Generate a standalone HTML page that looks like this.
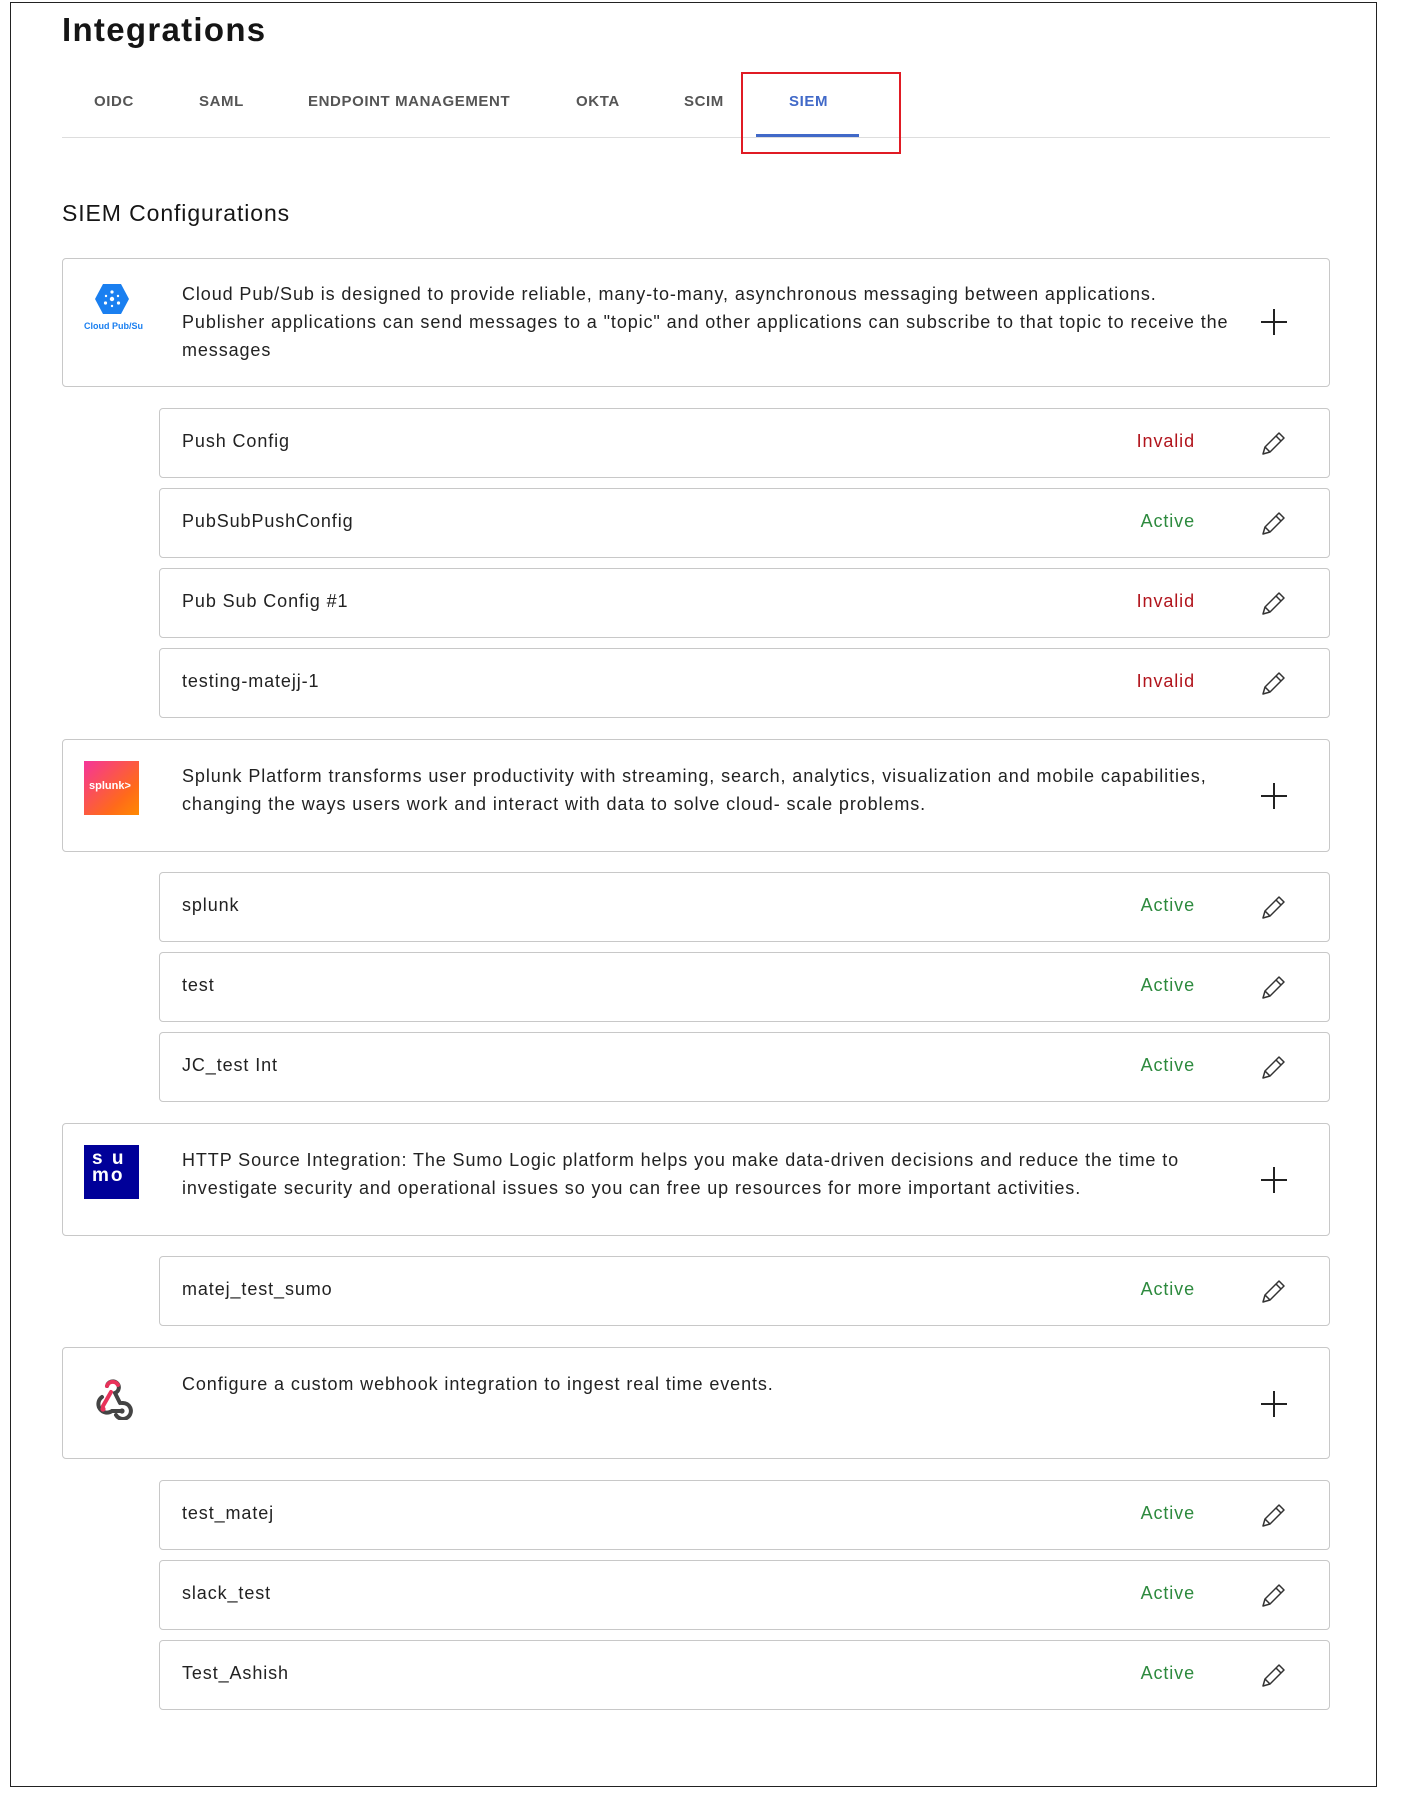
<!DOCTYPE html>
<html><head><meta charset="utf-8"><style>
*{margin:0;padding:0;box-sizing:border-box}
body{width:1411px;height:1818px;background:#fff;position:relative;font-family:"Liberation Sans",sans-serif;color:#222;overflow:hidden}
.a{position:absolute}
.outer{left:10px;top:2px;width:1367px;height:1785px;border:1px solid #222}
h1{position:absolute;left:62px;top:11px;font-size:33px;font-weight:bold;color:#151515;letter-spacing:1.3px}
.tab{position:absolute;top:93px;font-size:15px;font-weight:bold;color:#555;letter-spacing:0.6px}
.card{position:absolute;left:62px;width:1268px;border:1px solid #c8c8c8;border-radius:4px;background:#fff}
.row{position:absolute;left:159px;width:1171px;height:70px;border:1px solid #c8c8c8;border-radius:4px;background:#fff}
.row .n{position:absolute;left:22px;top:22px;font-size:18px;letter-spacing:0.9px;color:#222}
.row .s{position:absolute;right:134px;top:22px;font-size:18px;letter-spacing:0.9px}
.inv{color:#b1141c}.act{color:#2d8a3e}
.row svg{position:absolute;left:1099px;top:21px}
.desc{position:absolute;left:119px;font-size:18px;line-height:28px;letter-spacing:0.9px;color:#222;white-space:nowrap}
.plus{position:absolute;left:1198px;width:26px;height:26px}
.plus:before{content:"";position:absolute;left:12px;top:0;width:2px;height:26px;background:#222}
.plus:after{content:"";position:absolute;left:0;top:12px;width:26px;height:2px;background:#222}
</style></head><body>
<div class="a outer"></div>
<h1>Integrations</h1>
<div class="tab" style="left:94px">OIDC</div>
<div class="tab" style="left:199px">SAML</div>
<div class="tab" style="left:308px">ENDPOINT MANAGEMENT</div>
<div class="tab" style="left:576px">OKTA</div>
<div class="tab" style="left:684px">SCIM</div>
<div class="tab" style="left:789px;color:#4169c8">SIEM</div>
<div class="a" style="left:62px;top:137px;width:1268px;height:1px;background:#ddd"></div>
<div class="a" style="left:756px;top:134px;width:103px;height:3px;background:#4169c8"></div>
<div class="a" style="left:741px;top:72px;width:160px;height:82px;border:2.5px solid #e01b24"></div>
<div class="a" style="left:62px;top:200px;font-size:23px;letter-spacing:0.9px;color:#151515">SIEM Configurations</div>

<!-- Card 1 -->
<div class="card" style="top:258px;height:129px">
 <svg class="a" style="left:31px;top:24px" width="36" height="32" viewBox="0 0 36 32"><polygon points="9,1 27,1 35,16 27,31 9,31 1,16" fill="#1a7ff0"/><circle cx="18" cy="16" r="2.2" fill="#fff"/><circle cx="18" cy="9" r="1.6" fill="#fff"/><circle cx="11.5" cy="20" r="1.6" fill="#fff"/><circle cx="24.5" cy="20" r="1.6" fill="#fff"/><circle cx="12" cy="13" r="1.2" fill="#fff"/><circle cx="24" cy="13" r="1.2" fill="#fff"/><circle cx="18" cy="23" r="1.2" fill="#fff"/></svg>
 <div class="a" style="left:21px;top:62px;font-size:9px;color:#1a7ff0;font-weight:bold">Cloud Pub/Su</div>
 <div class="desc" style="top:21px">Cloud Pub/Sub is designed to provide reliable, many-to-many, asynchronous messaging between applications.<br>Publisher applications can send messages to a "topic" and other applications can subscribe to that topic to receive the<br>messages</div>
 <div class="plus" style="top:50px"></div>
</div>
<div class="row" style="top:408px"><div class="n">Push Config</div><div class="s inv">Invalid</div><svg width="28" height="28" viewBox="0 0 28 28" fill="none" stroke="#333" stroke-width="1.5" stroke-linejoin="round"><path d="M4 24 L6 17 L20 3 L25 8 L11 22 Z M17 6 L22 11 M6 17 L11 22"/></svg></div>
<div class="row" style="top:488px"><div class="n">PubSubPushConfig</div><div class="s act">Active</div><svg width="28" height="28" viewBox="0 0 28 28" fill="none" stroke="#333" stroke-width="1.5" stroke-linejoin="round"><path d="M4 24 L6 17 L20 3 L25 8 L11 22 Z M17 6 L22 11 M6 17 L11 22"/></svg></div>
<div class="row" style="top:568px"><div class="n">Pub Sub Config #1</div><div class="s inv">Invalid</div><svg width="28" height="28" viewBox="0 0 28 28" fill="none" stroke="#333" stroke-width="1.5" stroke-linejoin="round"><path d="M4 24 L6 17 L20 3 L25 8 L11 22 Z M17 6 L22 11 M6 17 L11 22"/></svg></div>
<div class="row" style="top:648px"><div class="n">testing-matejj-1</div><div class="s inv">Invalid</div><svg width="28" height="28" viewBox="0 0 28 28" fill="none" stroke="#333" stroke-width="1.5" stroke-linejoin="round"><path d="M4 24 L6 17 L20 3 L25 8 L11 22 Z M17 6 L22 11 M6 17 L11 22"/></svg></div>

<!-- Card 2 -->
<div class="card" style="top:739px;height:113px">
 <div class="a" style="left:21px;top:21px;width:55px;height:54px;background:linear-gradient(135deg,#f5349a,#ff6a1a 70%,#ff8a00)"></div>
 <div class="a" style="left:26px;top:40px;font-size:11px;color:#fff;font-weight:bold">splunk&gt;</div>
 <div class="desc" style="top:22px">Splunk Platform transforms user productivity with streaming, search, analytics, visualization and mobile capabilities,<br>changing the ways users work and interact with data to solve cloud- scale problems.</div>
 <div class="plus" style="top:43px"></div>
</div>
<div class="row" style="top:872px"><div class="n">splunk</div><div class="s act">Active</div><svg width="28" height="28" viewBox="0 0 28 28" fill="none" stroke="#333" stroke-width="1.5" stroke-linejoin="round"><path d="M4 24 L6 17 L20 3 L25 8 L11 22 Z M17 6 L22 11 M6 17 L11 22"/></svg></div>
<div class="row" style="top:952px"><div class="n">test</div><div class="s act">Active</div><svg width="28" height="28" viewBox="0 0 28 28" fill="none" stroke="#333" stroke-width="1.5" stroke-linejoin="round"><path d="M4 24 L6 17 L20 3 L25 8 L11 22 Z M17 6 L22 11 M6 17 L11 22"/></svg></div>
<div class="row" style="top:1032px"><div class="n">JC_test Int</div><div class="s act">Active</div><svg width="28" height="28" viewBox="0 0 28 28" fill="none" stroke="#333" stroke-width="1.5" stroke-linejoin="round"><path d="M4 24 L6 17 L20 3 L25 8 L11 22 Z M17 6 L22 11 M6 17 L11 22"/></svg></div>

<!-- Card 3 -->
<div class="card" style="top:1123px;height:113px">
 <div class="a" style="left:21px;top:21px;width:55px;height:54px;background:#000099"></div>
 <div class="a" style="left:29px;top:26px;font-size:19px;line-height:17px;color:#fff;font-weight:bold;letter-spacing:2px">s u<br>mo</div>
 <div class="desc" style="top:22px">HTTP Source Integration: The Sumo Logic platform helps you make data-driven decisions and reduce the time to<br>investigate security and operational issues so you can free up resources for more important activities.</div>
 <div class="plus" style="top:43px"></div>
</div>
<div class="row" style="top:1256px"><div class="n">matej_test_sumo</div><div class="s act">Active</div><svg width="28" height="28" viewBox="0 0 28 28" fill="none" stroke="#333" stroke-width="1.5" stroke-linejoin="round"><path d="M4 24 L6 17 L20 3 L25 8 L11 22 Z M17 6 L22 11 M6 17 L11 22"/></svg></div>

<!-- Card 4 -->
<div class="card" style="top:1347px;height:112px">
 <svg class="a" style="left:27px;top:30px" width="44" height="42" viewBox="0 0 44 42" fill="none" stroke-width="4" stroke-linecap="round">
  <path d="M17 8 A6 6 0 1 1 25 15 L30 25" stroke="#444"/>
  <path d="M21 14 L13 28" stroke="#e8325a"/>
  <path d="M12 19 A8 8 0 1 0 22 33 L32 33" stroke="#444"/>
  <path d="M32 25 A8 8 0 1 1 26 37" stroke="#444"/>
  <path d="M17 8 A6 6 0 0 1 28 7" stroke="#e8325a"/>
  <circle cx="13" cy="31" r="2.6" fill="#e8325a" stroke="none"/>
  <circle cx="32" cy="33" r="2.6" fill="#444" stroke="none"/>
 </svg>
 <div class="desc" style="top:22px">Configure a custom webhook integration to ingest real time events.</div>
 <div class="plus" style="top:43px"></div>
</div>
<div class="row" style="top:1480px"><div class="n">test_matej</div><div class="s act">Active</div><svg width="28" height="28" viewBox="0 0 28 28" fill="none" stroke="#333" stroke-width="1.5" stroke-linejoin="round"><path d="M4 24 L6 17 L20 3 L25 8 L11 22 Z M17 6 L22 11 M6 17 L11 22"/></svg></div>
<div class="row" style="top:1560px"><div class="n">slack_test</div><div class="s act">Active</div><svg width="28" height="28" viewBox="0 0 28 28" fill="none" stroke="#333" stroke-width="1.5" stroke-linejoin="round"><path d="M4 24 L6 17 L20 3 L25 8 L11 22 Z M17 6 L22 11 M6 17 L11 22"/></svg></div>
<div class="row" style="top:1640px"><div class="n">Test_Ashish</div><div class="s act">Active</div><svg width="28" height="28" viewBox="0 0 28 28" fill="none" stroke="#333" stroke-width="1.5" stroke-linejoin="round"><path d="M4 24 L6 17 L20 3 L25 8 L11 22 Z M17 6 L22 11 M6 17 L11 22"/></svg></div>
</body></html>
